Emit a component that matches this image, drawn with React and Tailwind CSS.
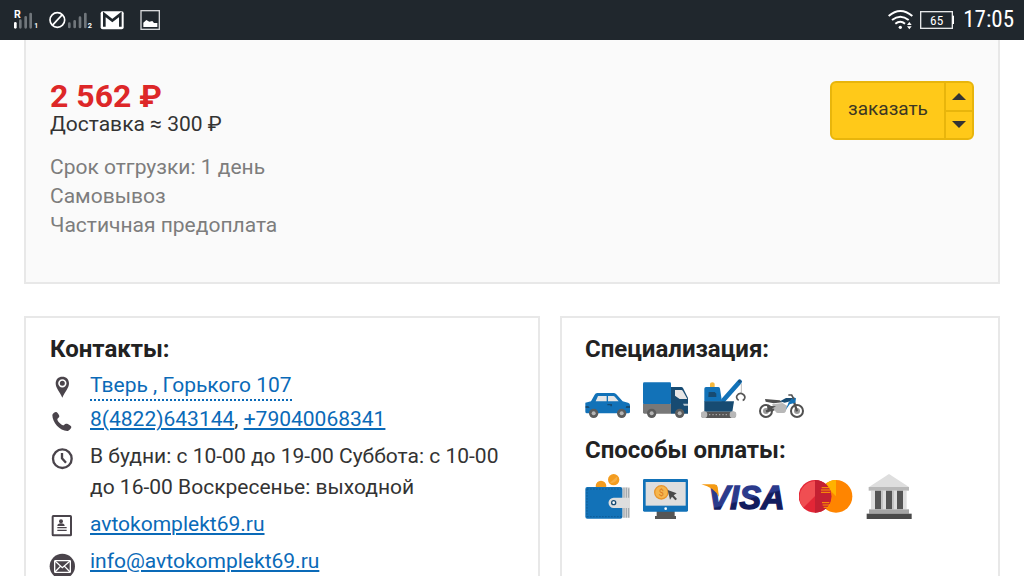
const SignalIcons = () => (
  <svg viewBox="40 0 240 120" className="h-10 w-20" aria-hidden="true">
    <text x="43" y="54" fontSize="32" fontWeight="700" fill="#fff" className="font-['Roboto']">R</text>
    <g strokeWidth="8" strokeLinecap="round">
      <path d="M47 70v12" stroke="#fff" />
      <path d="M62 62v20M78 52v30M93 42v40" stroke="#70767b" />
      <path d="M209 71v10M225 64v17M241 53v28M257 42v39" stroke="#70767b" />
    </g>
    <circle cx="173" cy="60" r="22" fill="none" stroke="#fff" strokeWidth="5" />
    <path d="M158 76l30-32" stroke="#fff" strokeWidth="5" />
    <text x="104" y="84" fontSize="20" fontWeight="700" fill="#fff" className="font-['Roboto']">1</text>
    <text x="264" y="84" fontSize="22" fontWeight="700" fill="#fff" className="font-['Roboto']">2</text>
  </svg>
);

const MailBadge = () => (
  <svg viewBox="300 0 72 120" className="h-10 w-6" aria-hidden="true">
    <rect x="302" y="34" width="69" height="54" rx="6" fill="#fff" />
    <path d="M313 80V43l24 19 24-19v37" fill="none" stroke="#20272d" strokeWidth="8" />
  </svg>
);

const PictureIcon = () => (
  <svg viewBox="420 0 60 120" className="h-10 w-5" aria-hidden="true">
    <rect x="423" y="32" width="55" height="56" fill="none" stroke="#d5d7d9" strokeWidth="4" />
    <path d="M430 81V68l9-8 9 5 9-2 5 6 10 0v12z" fill="#fff" />
  </svg>
);

const WifiIcon = () => (
  <svg viewBox="51 0 81 120" className="h-10 w-[27px]" aria-hidden="true">
    <g fill="none" stroke="#fff" strokeWidth="6">
      <path d="M56 48q35-30 71 0" />
      <path d="M66 60q25-20 50 0" />
      <path d="M76 71q15-12 29 0" />
    </g>
    <circle cx="91" cy="82" r="5" fill="#fff" />
    <path d="M111 75l7-9 7 9zM111 79h14l-7 9z" fill="#fff" />
  </svg>
);

const BatteryIcon = () => (
  <svg viewBox="147 0 108 120" className="h-10 w-9" aria-hidden="true">
    <rect x="152" y="35" width="95" height="50" fill="none" stroke="#e6e7e8" strokeWidth="4" />
    <rect x="247" y="47" width="5" height="25" fill="#fff" />
    <text x="200" y="75" fontSize="40" textAnchor="middle" fill="#fff" className="font-['Roboto_Condensed','Liberation_Sans_Narrow',sans-serif]">
      65
    </text>
  </svg>
);

const iconClass = "h-[31px] w-[26px]";

const PinIcon = () => (
  <svg viewBox="90 183 78 93" className={iconClass} aria-hidden="true">
    <path d="M127 203c-12 0-20 8-20 20 0 14 12 26 20 43 8-17 20-29 20-43 0-12-8-20-20-20z" fill="#4a444b" />
    <circle cx="127" cy="223" r="10" fill="none" stroke="#fff" strokeWidth="5" />
  </svg>
);

const PhoneIcon = () => (
  <svg viewBox="90 285 78 93" className={iconClass} aria-hidden="true">
    <path
      d="M97 318c1-5 8-10 12-9 4 2 9 9 9 13s-7 6-6 10c2 6 11 15 17 17 4 1 5-6 10-5 5 0 15 6 15 10s-7 12-12 12c-23 0-45-26-45-48z"
      fill="#4a444b"
    />
  </svg>
);

const ClockIcon = () => (
  <svg viewBox="90 33 78 93" className={iconClass} aria-hidden="true">
    <circle cx="127" cy="86" r="28" fill="none" stroke="#4a444b" strokeWidth="7" />
    <path d="M126 69v16l12 13" fill="none" stroke="#4a444b" strokeWidth="7" />
  </svg>
);

const SiteIcon = () => (
  <svg viewBox="90 237 78 93" className={iconClass} aria-hidden="true">
    <rect x="98" y="258" width="55" height="58" rx="2" fill="none" stroke="#4a444b" strokeWidth="6" />
    <circle cx="123" cy="274" r="6" fill="#4a444b" />
    <path d="M112 288q0-8 11-8t11 8z" fill="#4a444b" />
    <path d="M112 293h28M112 301h28" stroke="#4a444b" strokeWidth="4" />
  </svg>
);

const EmailIcon = () => (
  <svg viewBox="90 345 78 93" className={`${iconClass} overflow-visible`} aria-hidden="true">
    <circle cx="127" cy="406" r="38" fill="#4a444b" />
    <g fill="none" stroke="#fff" strokeWidth="4">
      <rect x="104" y="389" width="47" height="35" rx="2" />
      <path d="M105 390l22 20 23-20M105 423l16-17M150 423l-16-17" />
    </g>
  </svg>
);

const Wheel = ({ cx, cy }) => (
  <g>
    <circle cx={cx} cy={cy} r="14" fill="#5c5c5c" />
    <circle cx={cx} cy={cy} r="6" fill="#b5b5b5" />
  </g>
);

const CarIcon = () => (
  <svg viewBox="30 12 135 135" className="size-[45px]" role="img" aria-label="Легковые">
    <path d="M31 98l17-4 11-20q2-5 8-5h48q5 0 9 4l19 21 16 4q5 1 6 7v20q0 5-5 5H36q-5 0-5-5z" fill="#1272b8" />
    <path d="M69 78h26v16H62zM99 78h16q3 0 5 3l11 13H99z" fill="#e6e6e6" />
    <path d="M32 108h8l4 6H32zM154 108h12v6h-14zM97 102h14v7h-5v-3h-9z" fill="#174b72" />
    <Wheel cx={56} cy={130} />
    <Wheel cx={140} cy={130} />
  </svg>
);

const TruckIcon = () => (
  <svg viewBox="204 12 135 135" className="size-[45px]" role="img" aria-label="Грузовые">
    <rect x="204" y="37" width="84" height="66" rx="4" fill="#1272b8" />
    <path d="M204 102h84v29h-80q-4 0-4-4z" fill="#787878" />
    <path d="M288 51h31q3 0 5 3l15 30v47h-51z" fill="#174b72" />
    <path d="M300 60h19q3 0 5 4l13 23h-23l-14-10z" fill="#e6e6e6" />
    <path d="M324 101h15v6h-12z" fill="#b9c7d1" />
    <Wheel cx={230} cy={130} />
    <Wheel cx={314} cy={130} />
  </svg>
);

const CraneIcon = () => (
  <svg viewBox="33 12 135 135" className="size-[45px]" role="img" aria-label="Спецтехника">
    <path d="M60 52V42q0-5 7-5t7 5v10z" fill="#f5b83d" />
    <path d="M100 91l49-56" stroke="#1272b8" strokeWidth="14" strokeLinecap="round" />
    <circle cx="149" cy="34" r="5" fill="#1c5380" />
    <path d="M43 95V56q0-5 5-5h37q5 0 5 5l6 39z" fill="#1272b8" />
    <path d="M56 66h18l5 5v10H55z" fill="#174b72" />
    <path d="M43 94h89l-5 31H43z" fill="#174b72" />
    <path d="M154 40v28" stroke="#bcbcbc" strokeWidth="3" />
    <path d="M146 91q-9-6-5-14 5-9 15-6 11 5 8 14-2 5-6 6" fill="none" stroke="#555" strokeWidth="5" />
    <rect x="33" y="125" width="105" height="19" rx="9" fill="#555" />
    <circle cx="42" cy="134" r="10" fill="#b8b8b8" />
    <circle cx="129" cy="134" r="10" fill="#b8b8b8" />
    <path d="M57 134h59" stroke="#a5a5a5" strokeWidth="4" strokeDasharray="4 6" />
  </svg>
);

const MotoIcon = () => (
  <svg viewBox="204 12 135 135" className="size-[45px]" role="img" aria-label="Мотоциклы">
    <path d="M243 103l32-4 14 9-5 17q-2 4-7 4h-17q-5 0-7-5z" fill="#b8b8b8" />
    <g fill="none" stroke="#505050" strokeWidth="6">
      <circle cx="225" cy="123" r="18" />
      <circle cx="318" cy="123" r="18" />
    </g>
    <circle cx="225" cy="123" r="9" fill="#999" />
    <circle cx="318" cy="123" r="9" fill="#999" />
    <path d="M222 87l44 4 8 6-26 3-24-5zM228 107l27 2-25 15z" fill="#505050" />
    <path d="M225 124l25-6M318 124l-11-35" stroke="#505050" strokeWidth="7" />
    <path d="M267 94l18-10h22l-9 10-17 4z" fill="#174b72" />
    <path d="M284 120l9-23 15-15 7 3-2 13-17 5z" fill="#1272b8" />
    <path d="M292 75h10l7 13" fill="none" stroke="#505050" strokeWidth="5" />
  </svg>
);

const WalletIcon = () => (
  <svg viewBox="30 27 135 135" className="size-[45px]" role="img" aria-label="Наличные">
    <circle cx="116" cy="44" r="17" fill="#f39c1f" />
    <path d="M105 53l22-19a17 17 0 0 1-22 19z" fill="#f7ae43" />
    <circle cx="78" cy="63" r="16" fill="#f39c1f" />
    <path d="M140 67h22q3 0 3 4v87h-25z" fill="#d9d9d9" />
    <path d="M147 68v90M154 68v90M161 70v88" stroke="#9aa0a5" strokeWidth="3" />
    <rect x="31" y="66" width="111" height="95" rx="6" fill="#1272b8" />
    <path d="M36 72h105M36 155h105M36 72v83" fill="none" stroke="#0c5186" strokeWidth="2" strokeDasharray="5 4" />
    <path d="M165 98h-49a15 15 0 0 0 0 31h49z" fill="#dedede" />
    <circle cx="116" cy="113" r="8" fill="#174b72" />
    <circle cx="116" cy="113" r="4" fill="#fff" />
  </svg>
);

const MonitorIcon = () => (
  <svg viewBox="204 27 135 135" className="size-[45px]" role="img" aria-label="Электронные деньги">
    <path d="M245 138h54v15h4v9h-63v-9h5z" fill="#555" />
    <rect x="204" y="42" width="135" height="98" rx="4" fill="#1272b8" />
    <rect x="212" y="51" width="120" height="71" fill="#dedede" />
    <circle cx="272" cy="131" r="4" fill="#fff" />
    <circle cx="259" cy="82" r="20" fill="#f6b64e" stroke="#e8952b" strokeWidth="4" />
    <text x="259" y="92" textAnchor="middle" fontSize="27" fill="#d97a20" className="font-['Roboto']">$</text>
    <path d="M278 75l27 10-9 6 10 11-5 4-10-11-6 9z" fill="#4a4a4a" />
  </svg>
);

const VisaLogo = () => (
  <svg viewBox="18 27 255 135" className="h-[45px] w-[85px] overflow-visible" role="img" aria-label="Visa">
    <defs>
      <linearGradient id="visa" gradientUnits="userSpaceOnUse" x1="150" y1="57" x2="170" y2="132">
        <stop offset="0.55" stopColor="#2a3a8c" />
        <stop offset="0.62" stopColor="#121c5e" />
      </linearGradient>
    </defs>
    <text
      x="40"
      y="131"
      fontSize="98"
      fontWeight="700"
      fontStyle="italic"
      fill="url(#visa)"
      stroke="url(#visa)"
      strokeWidth="4"
      className="font-['Liberation_Sans',sans-serif]"
    >
      VISA
    </text>
    <path d="M19 58h39q8 0 10 8l4 30q-15-29-53-38z" fill="#f59a12" />
  </svg>
);

const MastercardLogo = () => (
  <svg viewBox="27 27 162 135" className="h-[45px] w-[54px]" role="img" aria-label="Mastercard">
    <circle cx="138" cy="94" r="49" fill="#ff8500" />
    <path d="M138 45a49 49 0 0 0-34 14l34 35z" fill="#ffb200" />
    <circle cx="75" cy="94" r="49" fill="#e32636" />
    <path d="M40 128a49 49 0 0 1 69-69z" fill="#f04e52" />
    <path d="M75 45a49 49 0 0 1 0 98z" fill="#c42032" />
    <path d="M95 68h26M93 75h27M93 82h28M96 113h22M98 120h22M101 127h14" stroke="#ff9c00" strokeWidth="3" />
  </svg>
);

const BankIcon = () => (
  <svg viewBox="225 27 138 135" className="h-[45px] w-[46px]" role="img" aria-label="Банковский перевод">
    <path d="M294 27l60 39H234z" fill="#dedede" />
    <rect x="240" y="77" width="107" height="56" fill="#dedede" />
    <rect x="233" y="66" width="121" height="11" fill="#b8b8b8" />
    <path d="M252 77h18v56h-18zM285 77h18v56h-18zM318 77h18v56h-18z" fill="#555" />
    <path d="M271 77h4v56h-4zM304 77h4v56h-4z" fill="#b8b8b8" />
    <rect x="234" y="133" width="120" height="13" fill="#a5a5a5" />
    <rect x="227" y="146" width="135" height="16" fill="#4a4a4a" />
  </svg>
);

const ContactRow = ({ icon, children, className = "pb-1.5" }) => (
  <li className={`flex ${className}`}>
    <span className="w-10 shrink-0">{icon}</span>
    <div className="min-w-0 flex-1">{children}</div>
  </li>
);

const linkClass = "text-[#0a6ab8] underline decoration-2 underline-offset-2";

const StatusBar = () => (
  <header className="flex h-10 shrink-0 items-center justify-between bg-[#20272d] pr-[10px] pl-[13px] text-white">
    <div className="flex items-center">
      <SignalIcons />
      <span className="ml-[7px] flex gap-4">
        <MailBadge />
        <PictureIcon />
      </span>
    </div>
    <div className="flex items-center">
      <WifiIcon />
      <span className="mr-2 ml-[5px]">
        <BatteryIcon />
      </span>
      <time className="font-['Roboto_Condensed','Liberation_Sans_Narrow',sans-serif] text-[23px] leading-10">17:05</time>
    </div>
  </header>
);

const OrderButton = () => (
  <div className="flex h-[59px] w-36 overflow-hidden rounded-md border-2 border-[#e8b50c] bg-[#ffc919] text-[#3b3723]">
    <button type="button" className="flex-1 pb-0.5 text-[19px]">
      заказать
    </button>
    <div className="flex w-7 flex-col border-l-2 border-[#e8b50c]">
      <button type="button" aria-label="Больше" className="flex flex-1 items-center justify-center border-b-2 border-[#e8b50c]">
        <svg viewBox="0 0 14 7" className="h-[7px] w-3.5">
          <path d="M0 7l7-7 7 7z" fill="#333" />
        </svg>
      </button>
      <button type="button" aria-label="Меньше" className="flex flex-1 items-center justify-center">
        <svg viewBox="0 0 14 7" className="h-[7px] w-3.5">
          <path d="M0 0l7 7 7-7z" fill="#333" />
        </svg>
      </button>
    </div>
  </div>
);

const App = () => {
  return (
    <div className="flex h-screen flex-col overflow-hidden bg-white font-['Roboto',sans-serif] text-[21px] text-[#333]">
      <StatusBar />

      <main className="flex min-h-0 flex-1 flex-col gap-8 px-6">
        <section className="flex shrink-0 items-start justify-between border-2 border-t-0 border-[#e8e8e8] bg-[#fafafa] px-6 pt-[41px] pb-[42px]">
          <div>
            <p className="text-[32px] leading-[30px] font-bold text-[#dd2728]">2 562 ₽</p>
            <p className="leading-[26px]">Доставка ≈ 300 ₽</p>
            <ul className="mt-4 leading-[29px] text-[#7d7d7d]">
              <li>Срок отгрузки: 1 день</li>
              <li>Самовывоз</li>
              <li>Частичная предоплата</li>
            </ul>
          </div>
          <OrderButton />
        </section>

        <div className="grid flex-1 grid-cols-[516fr_440fr] gap-5">
          <section className="border-2 border-b-0 border-[#e8e8e8] px-6 pt-[15px]">
            <h2 className="text-2xl leading-8 font-bold text-[#222]">Контакты:</h2>
            <ul className="mt-[5px] leading-[31px]">
              <ContactRow icon={<PinIcon />} className="pb-[3px]">
                <a href="#map" className="inline-block border-b-2 border-dotted border-[#0a6ab8] leading-7 text-[#0a6ab8]">
                  Тверь , Горького 107
                </a>
              </ContactRow>
              <ContactRow icon={<PhoneIcon />}>
                <a href="tel:84822643144" className={linkClass}>8(4822)643144</a>
                {", "}
                <a href="tel:+79040068341" className={linkClass}>+79040068341</a>
              </ContactRow>
              <ContactRow icon={<ClockIcon />}>
                В будни: с 10-00 до 19-00 Суббота: с 10-00 до 16-00 Воскресенье: выходной
              </ContactRow>
              <ContactRow icon={<SiteIcon />}>
                <a href="#site" className={linkClass}>avtokomplekt69.ru</a>
              </ContactRow>
              <ContactRow icon={<EmailIcon />}>
                <a href="mailto:info@avtokomplekt69.ru" className={linkClass}>info@avtokomplekt69.ru</a>
              </ContactRow>
            </ul>
          </section>

          <section className="border-2 border-b-0 border-[#e8e8e8] px-[23px] pt-[15px]">
            <h2 className="text-2xl leading-8 font-bold text-[#222]">Специализация:</h2>
            <div className="mt-[9px] flex gap-[13px]">
              <CarIcon />
              <TruckIcon />
              <CraneIcon />
              <MotoIcon />
            </div>
            <h2 className="mt-[15px] text-2xl leading-8 font-bold text-[#222]">Способы оплаты:</h2>
            <div className="mt-2 flex gap-[13px]">
              <WalletIcon />
              <MonitorIcon />
              <VisaLogo />
              <MastercardLogo />
              <BankIcon />
            </div>
          </section>
        </div>
      </main>
    </div>
  );
};

export default App;
